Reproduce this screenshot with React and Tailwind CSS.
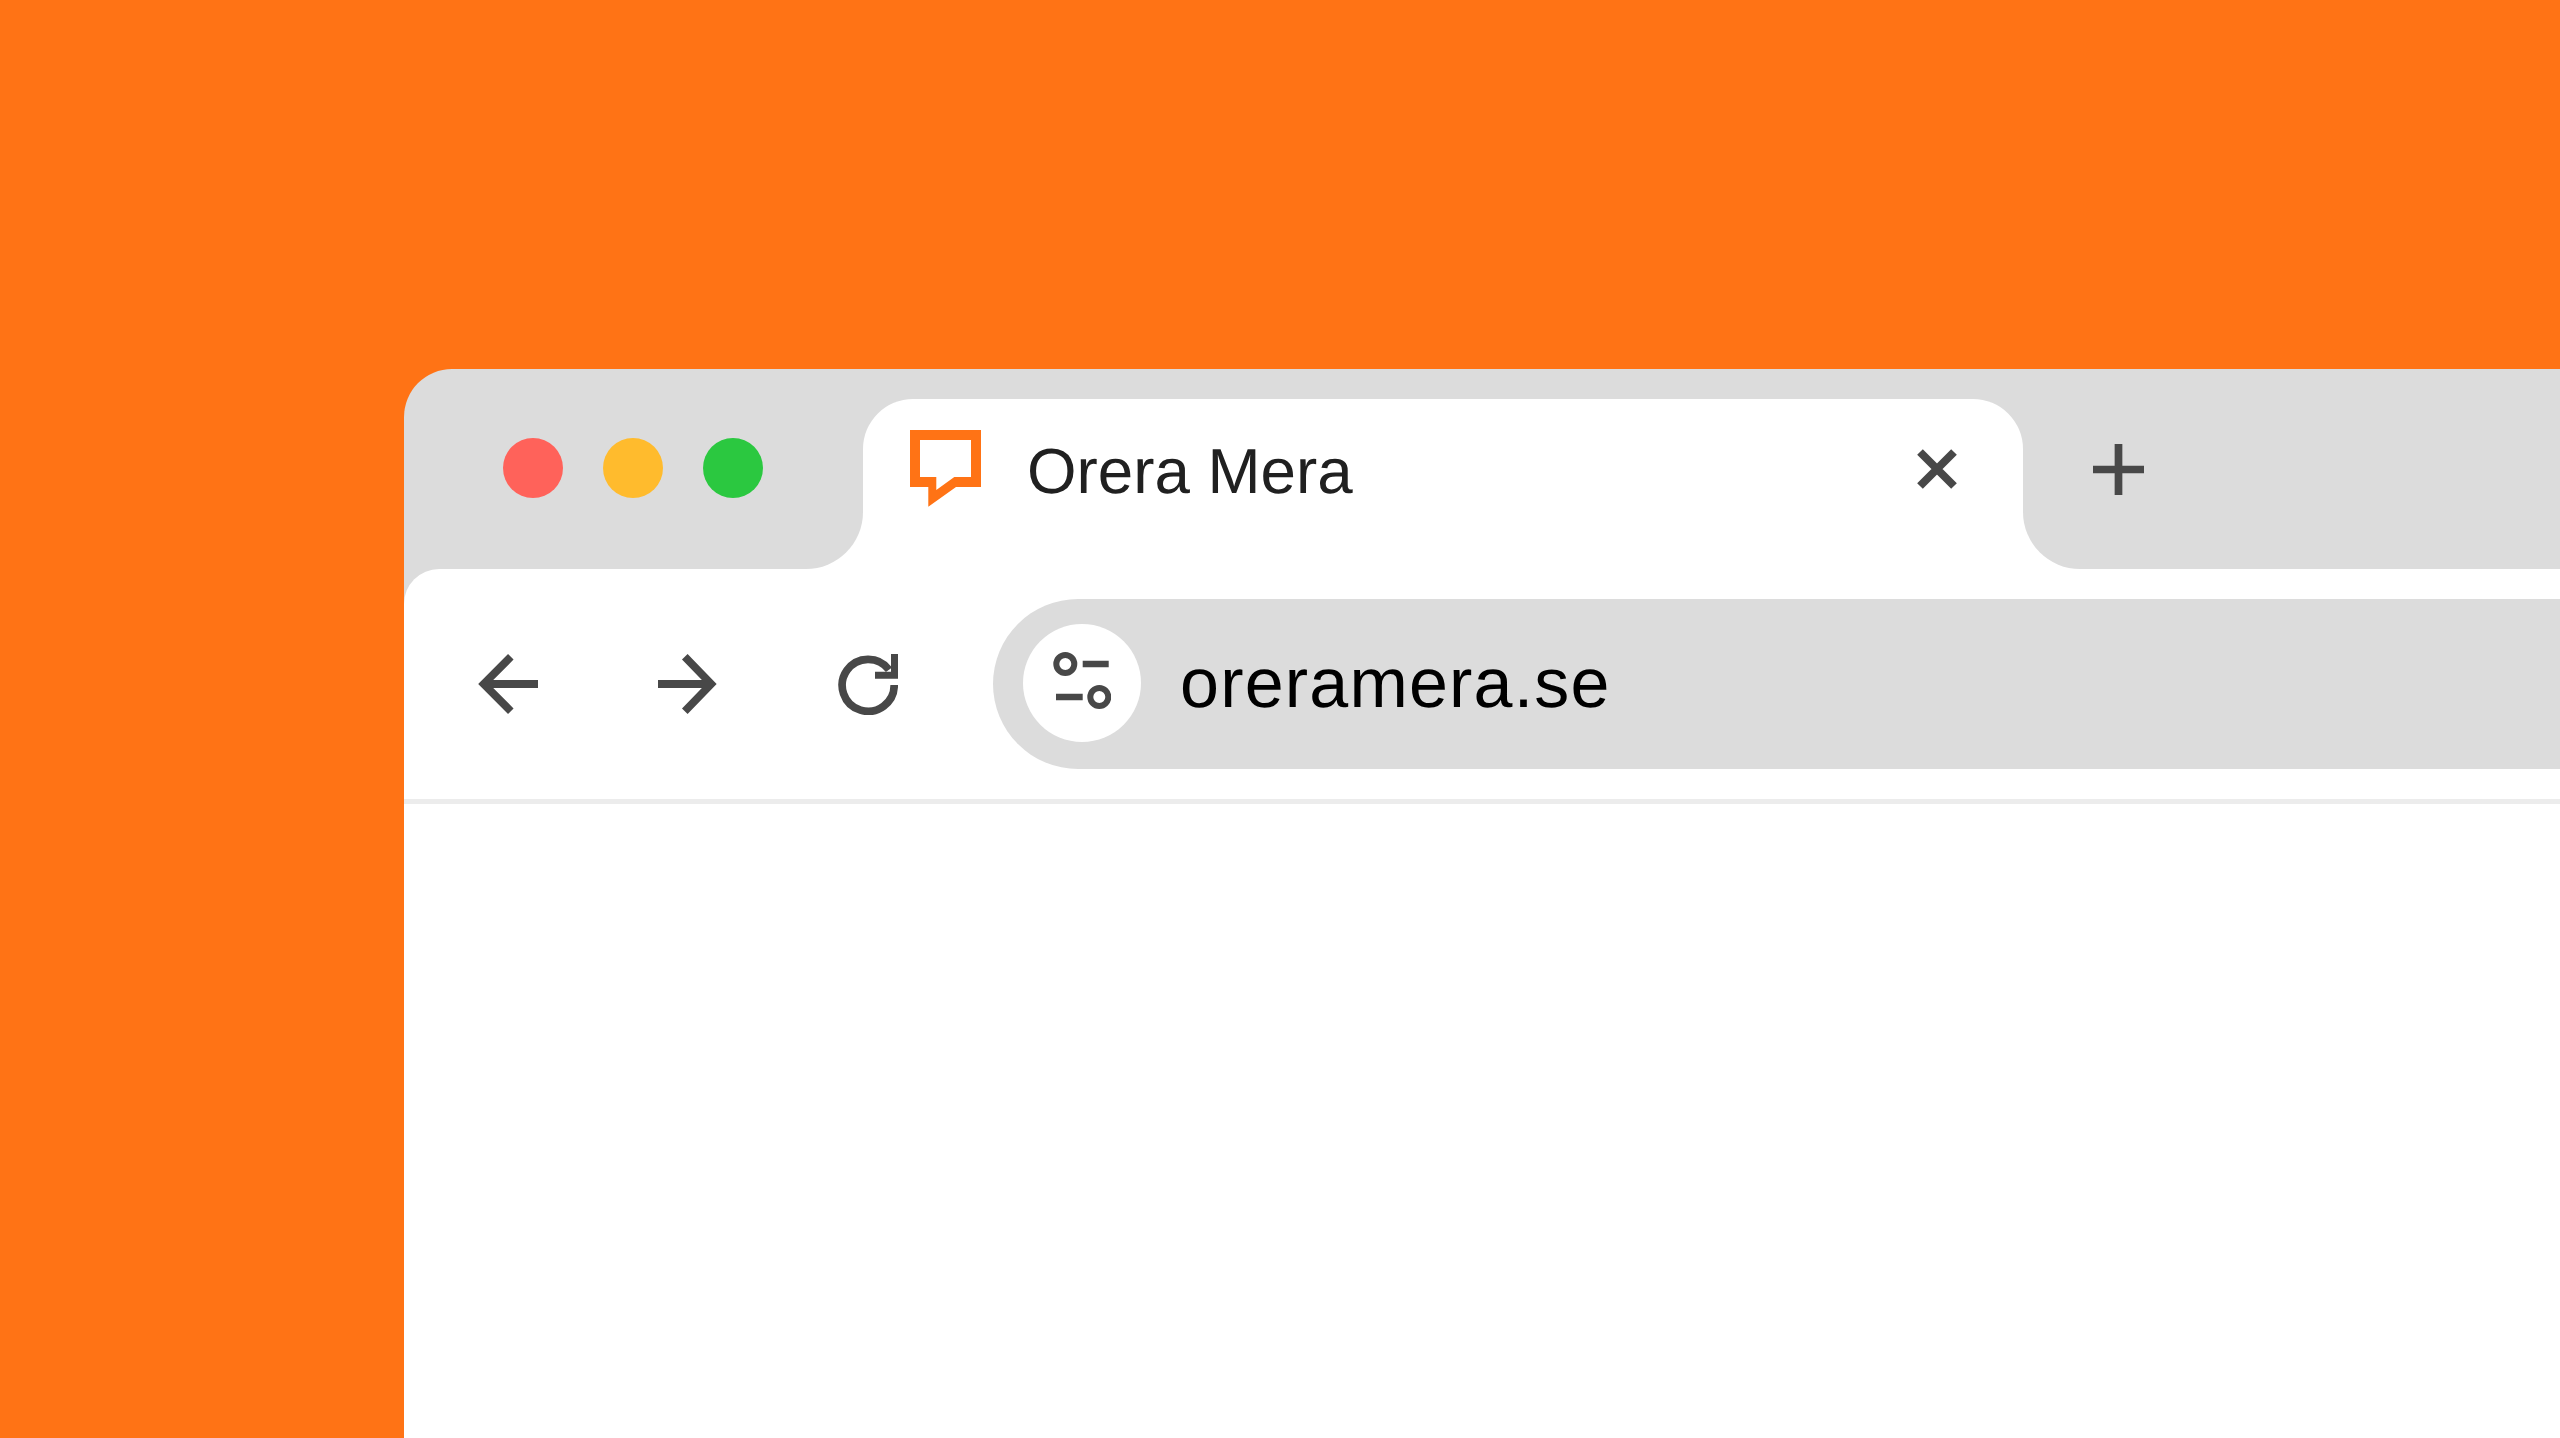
import React from "react";

const GRAY = "bg-[#dcdcdc]";
const TEXT_FONT = "font-['Liberation_Sans',Arial,sans-serif] [text-rendering:geometricPrecision]";

// inner curve where the tab meets the strip
function TabCorner({ side }) {
  return (
    <div className="w-[57px] h-[57px] shrink-0 self-end bg-white">
      <div
        className={`w-full h-full ${GRAY} ${side === "left" ? "rounded-br-[57px]" : "rounded-bl-[57px]"}`}
      />
    </div>
  );
}

function Logo() {
  return (
    <svg width="71" height="77" viewBox="0 0 71 77" className="shrink-0">
      <path
        fill="#ff7315"
        fillRule="evenodd"
        d="M0 0H71V57H46L18.3 76.7V57H0ZM10 10V47H26.3V60L44.3 47H61V10Z"
      />
    </svg>
  );
}

function CloseIcon() {
  return (
    <svg width="40" height="40" viewBox="0 0 40 40" className="shrink-0">
      <path d="M3 3L37 37M37 3L3 37" stroke="#484848" strokeWidth="8" fill="none" />
    </svg>
  );
}

function PlusIcon() {
  return (
    <svg width="51" height="51" viewBox="0 0 51 51" className="shrink-0">
      <path d="M25.5 0V51M0 25.5H51" stroke="#484848" strokeWidth="7.7" fill="none" />
    </svg>
  );
}

function BackIcon() {
  return (
    <svg width="60" height="60" viewBox="0 0 60 60" className="shrink-0">
      <path d="M60 30H6M32.8 2.8L5.7 30L32.8 57.2" stroke="#484848" strokeWidth="7.8" fill="none" />
    </svg>
  );
}

function ForwardIcon() {
  return (
    <svg width="60" height="60" viewBox="0 0 60 60" className="shrink-0">
      <path d="M0 30H53M26.8 2.8L53.2 30L26.8 57.2" stroke="#484848" strokeWidth="7.8" fill="none" />
    </svg>
  );
}

function ReloadIcon() {
  return (
    <svg width="60" height="61" viewBox="0 0 60 61" className="shrink-0">
      <path d="M56.2 31A26 26 0 1 1 51 15.7" stroke="#484848" strokeWidth="7.7" fill="none" />
      <path d="M53 0H60V24.7H37V17.7H53Z" fill="#484848" />
    </svg>
  );
}

function SlidersIcon() {
  return (
    <svg width="58" height="57" viewBox="0 0 58 57" className="shrink-0 mb-[4px]">
      <circle cx="12.3" cy="12" r="9" stroke="#484848" strokeWidth="6" fill="none" />
      <circle cx="46.3" cy="45" r="9" stroke="#484848" strokeWidth="6" fill="none" />
      <path d="M29.7 12H55.7M3 45H29.7" stroke="#484848" strokeWidth="6.3" fill="none" />
    </svg>
  );
}

export default function App() {
  return (
    <div className="h-screen overflow-hidden bg-[#ff7315] pl-[404px] pt-[369px] flex">
      <div className={`flex-1 flex flex-col rounded-tl-[48px] ${GRAY}`}>
        {/* tab strip */}
        <div className="h-[200px] flex shrink-0">
          <div className="w-[402px] pl-[99px] pb-[2px] flex items-center gap-[40px] shrink-0">
            <div className="w-[60px] h-[60px] rounded-full bg-[#ff625a]" />
            <div className="w-[60px] h-[60px] rounded-full bg-[#ffbb2d]" />
            <div className="w-[60px] h-[60px] rounded-full bg-[#2bc840]" />
          </div>
          <TabCorner side="left" />
          <div className="w-[1160px] h-[170px] mt-[30px] shrink-0 bg-white rounded-t-[50px] pl-[47px] pr-[66px] pb-[31px] flex items-center">
            <Logo />
            <div className={`flex-1 ml-[46px] mt-[6px] ${TEXT_FONT} text-[63.7px] leading-none text-[#202020]`}>
              Orera Mera
            </div>
            <CloseIcon />
          </div>
          <TabCorner side="right" />
          <div className="flex-1 pl-[13px] flex items-center">
            <PlusIcon />
          </div>
        </div>

        {/* toolbar */}
        <div className="h-[235px] shrink-0 bg-white rounded-tl-[35px] border-b-[5px] border-[#ececec] pl-[74px] flex items-center gap-[120px]">
          <BackIcon />
          <ForwardIcon />
          <ReloadIcon />
          <div className={`flex-1 h-[170px] -ml-[25px] rounded-l-[85px] ${GRAY} pl-[30px] flex items-center`}>
            <div className="w-[118px] h-[118px] mb-[3px] rounded-full bg-white flex items-center justify-center shrink-0">
              <SlidersIcon />
            </div>
            <div className={`ml-[39px] mb-[3px] ${TEXT_FONT} text-[70px] tracking-[1.2px] leading-none text-black`}>
              oreramera.se
            </div>
          </div>
        </div>

        <div className="flex-1 bg-white" />
      </div>
    </div>
  );
}
